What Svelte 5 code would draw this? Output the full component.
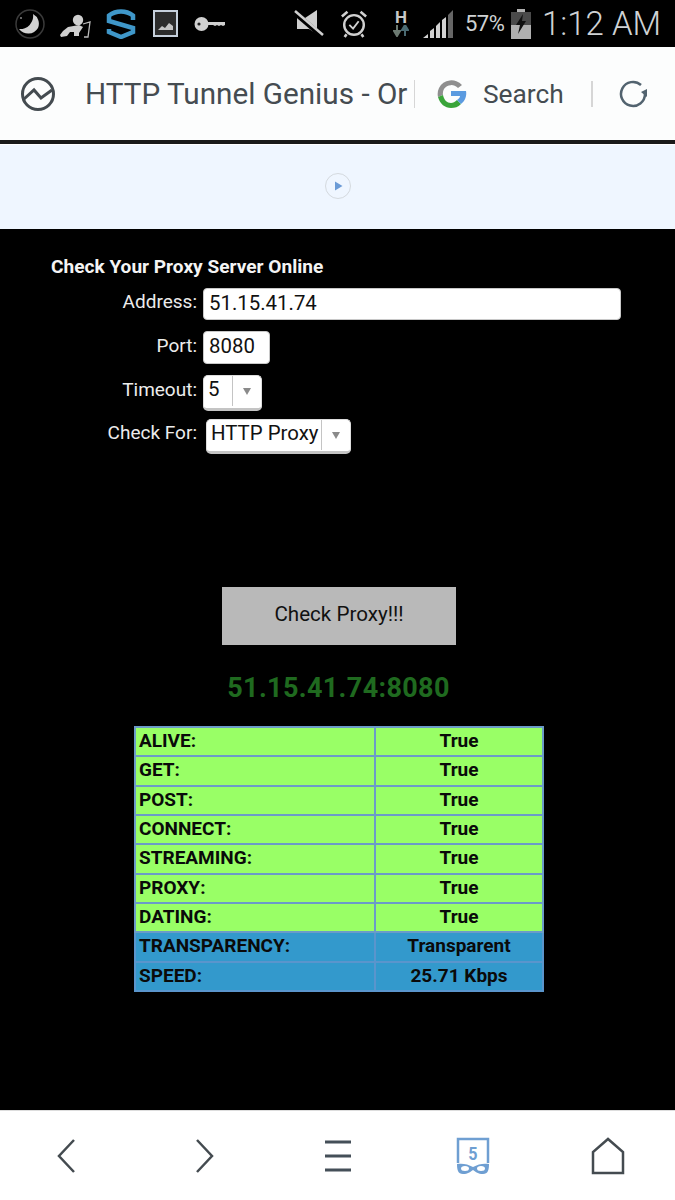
<script>
  const rows = [
    ['ALIVE:', 'True', 'g'], ['GET:', 'True', 'g'], ['POST:', 'True', 'g'], ['CONNECT:', 'True', 'g'],
    ['STREAMING:', 'True', 'g'], ['PROXY:', 'True', 'g'], ['DATING:', 'True', 'g'],
    ['TRANSPARENCY:', 'Transparent', 'b'], ['SPEED:', '25.71 Kbps', 'b']
  ];
</script>

<div class="page">
  <header class="status">
    <svg class="i-moon" width="30" height="30" viewBox="0 0 30 30"><circle cx="15" cy="15" r="14" fill="none" stroke="#3a3a3a" stroke-width="1.5"/><path d="M18 5a11 11 0 0 1 5 14a11.500 11.500 0 0 1-19 1a13 13 0 0 0 14-15z" fill="#d2d2d2"/><circle cx="6" cy="9" r="1" fill="#888"/></svg>
    <svg class="i-baby" width="32" height="24" viewBox="0 0 32 24"><circle cx="19" cy="6" r="5.200" fill="#cfcfcf"/><path d="M1 21l3-4 5-4 11-2 4 2-2 3-2 3v3h-5v-4h-4l-3 4-6 1z" fill="#cfcfcf"/><path d="M24 10l7-2-2 15h-4" fill="none" stroke="#bbb" stroke-width="1.300"/></svg>
    <svg class="i-s" width="30" height="30" viewBox="0 0 30 30"><path d="M27 11V6.500C23 3.500 19 2.500 15 2.500S7 3.500 3 6.500V12l24 7v4l-12 5-12-5v-3" fill="none" stroke="#3f97c9" stroke-width="4.500"/></svg>
    <svg class="i-pic" width="25" height="28" viewBox="0 0 25 28"><rect x="1" y="1" width="23" height="25" fill="#2c2c2c" stroke="#c6d0dc" stroke-width="2"/><path d="M5 20l4-4 3 2 4-5 4 3v4z" fill="#c4c4c4"/></svg>
    <svg class="i-key" width="32" height="16" viewBox="0 0 32 16"><circle cx="7.500" cy="8" r="7" fill="#d0d0d0"/><circle cx="5" cy="8" r="1.600" fill="#222"/><path d="M14 6h17v3l-2 1-2-1-2 1-2-1-2 1-2-1h-5z" fill="#d0d0d0"/></svg>
    <svg class="i-mute" width="30" height="30" viewBox="0 0 30 30"><path d="M3 9h8l12-8v24l-8-5H3z" fill="#cfcfcf"/><path d="M1 4l28 24" stroke="#000" stroke-width="5"/><path d="M1 2l28 24" stroke="#cfcfcf" stroke-width="2.500"/></svg>
    <svg class="i-alarm" width="28" height="30" viewBox="0 0 30 32"><circle cx="15" cy="17" r="10.500" fill="none" stroke="#d0d0d0" stroke-width="2.600"/><path d="M10 17l4 4 6-8" fill="none" stroke="#d0d0d0" stroke-width="2"/><path d="M2 8l6-5M28 8l-6-5M7 27l-2 3M23 27l2 3" stroke="#d0d0d0" stroke-width="2.800"/></svg>
    <div class="net"><span>H</span><svg width="16" height="12" viewBox="0 0 16 12"><path d="M4 0v7M1 6l3 5 3-5z" stroke="#6c7a72" stroke-width="2" fill="#6c7a72"/><path d="M12 11V4M9 5l3-5 3 5z" stroke="#4a6a72" stroke-width="2" fill="#4a6a72"/></svg></div>
    <svg class="i-sig" width="31" height="31" viewBox="0 0 31 31"><path d="M0 30l5-4v4zM7 30v-7l4-3v10zM13 30V18l4-4v16zM19 30V12l4-3v21z" fill="#d2d2d2"/><path d="M25 30V7l5-5v28z" fill="#666"/></svg>
    <span class="pct">57%</span>
    <svg class="i-bat" width="20" height="30" viewBox="0 0 20 30"><path d="M6 0h8v3h6v27H0V3h6z" fill="#b0b0b0"/><path d="M0 3h20v13H0z" fill="#4a4a4a"/><path d="M12 5l-7 11h4l-2 9 8-13h-4z" fill="#111"/></svg>
    <span class="time">1:12 AM</span>
  </header>

  <nav class="urlbar">
    <svg class="i-globe" width="36" height="36" viewBox="0 0 36 36"><circle cx="18" cy="18" r="15.500" fill="none" stroke="#444b50" stroke-width="3"/><path d="M4 23l10-9 7 8 11-8" fill="none" stroke="#444b50" stroke-width="3"/></svg>
    <span class="title">HTTP Tunnel Genius - Or</span>
    <i class="sep"></i>
    <svg class="i-g" width="32" height="32" viewBox="0 0 32 32"><path d="M27 7A14 14 0 0 0 4 10a14 14 0 0 0-1 9l5-2a9 9 0 0 1 1-6 9 9 0 0 1 14-1z" fill="#8f8f8f"/><path d="M3 19c2 7 7 11 13 11 4 0 7-1 10-4l-4-4c-2 2-4 3-6 3-4 0-7-3-8-8z" fill="#3aa53a"/><path d="M16 13h15c1 5-1 10-5 13l-4-4c2-1 3-3 3-4h-9z" fill="#5b9be0"/></svg>
    <span class="search">Search</span>
    <i class="sep sep2"></i>
    <svg class="i-reload" width="30" height="30" viewBox="0 0 30 30"><path d="M26 15a12 12 0 1 1-4-9" fill="none" stroke="#52636f" stroke-width="2.500"/><path d="M28 10v8l-6-5z" fill="#52636f"/></svg>
  </nav>

  <aside class="ad">
    <div class="play"><svg width="26" height="26" viewBox="0 0 26 26"><circle cx="13" cy="13" r="12.500" fill="none" stroke="#d4d9de"/><path d="M10 8.500l7.500 4.500-7.500 4.500z" fill="#6b9bd6"/></svg></div>
  </aside>

  <main class="content">
    <h1>Check Your Proxy Server Online</h1>
    <form class="form">
      <label for="a">Address:</label>
      <div class="field addr" id="a">51.15.41.74</div>
      <label class="lower" for="p">Port:</label>
      <div class="field port" id="p">8080</div>
      <label class="lower" for="t">Timeout:</label>
      <div class="select sel-t" id="t"><span class="val">5</span><span class="arrow"></span></div>
      <label for="c">Check For:</label>
      <div class="select sel-c" id="c"><span class="val">HTTP Proxy</span><span class="arrow"></span></div>
    </form>
    <div class="btn-wrap"><button type="button">Check Proxy!!!</button></div>
    <h2>51.15.41.74:8080</h2>
    <table>
      <tbody>
        {#each rows as r}
          <tr class={r[2]}><th>{r[0]}</th><td>{r[1]}</td></tr>
        {/each}
      </tbody>
    </table>
  </main>

  <footer class="bottom">
    <svg class="b-back" width="24" height="36" viewBox="0 0 24 36"><path d="M19 2L4 18l15 16" fill="none" stroke="#444b50" stroke-width="2.500"/></svg>
    <svg class="b-fwd" width="24" height="36" viewBox="0 0 24 36"><path d="M5 2l15 16L5 34" fill="none" stroke="#444b50" stroke-width="2.500"/></svg>
    <svg class="b-menu" width="28" height="36" viewBox="0 0 28 36"><path d="M1 4h26M1 18h26M1 32h26" stroke="#444f58" stroke-width="3"/></svg>
    <div class="tabs"><svg width="34" height="38" viewBox="0 0 34 38"><path d="M2 26V2h30v24" fill="none" stroke="#6f9fd2" stroke-width="2.500"/><path d="M1 27c5-1 11 0 16 3 5-3 11-4 16-3 0 6-1 10-6 10-5 0-7-2-10-4-3 2-5 4-10 4-5 0-6-4-6-10z" fill="#6f9fd2"/><ellipse cx="9" cy="31.500" rx="4" ry="2.500" fill="#fff"/><ellipse cx="25" cy="31.500" rx="4" ry="2.500" fill="#fff"/></svg><span>5</span></div>
    <svg class="b-home" width="34" height="38" viewBox="0 0 34 38"><path d="M2 36V15L17 2l15 13v21z" fill="none" stroke="#444b50" stroke-width="2.500"/></svg>
  </footer>
</div>

<style>
  :global(body) { margin: 0; background: #000; font-family: Roboto, "Liberation Sans", sans-serif; }
  .page { width: 675px; height: 1200px; display: flex; flex-direction: column; overflow: hidden; background: #000; }

  .status { height: 47px; flex: none; display: flex; align-items: center; color: #cfd2d4; box-sizing: border-box; padding-left: 15px; }
  .i-baby { margin-left: 14px; margin-top: 4px; }
  .i-s { margin-left: 15px; }
  .i-pic { margin-left: 17px; }
  .i-key { margin-left: 16px; }
  .i-mute { margin-left: 68px; }
  .i-alarm { margin-left: 16px; }
  .net { margin-left: 24px; width: 18px; display: flex; flex-direction: column; align-items: center; }
  .net span { font-size: 17px; font-weight: 700; line-height: 15px; color: #c8c8c8; }
  .i-sig { margin-left: 13px; }
  .pct { margin-left: 11px; font-size: 22px; letter-spacing: -0.5px; width: 46px; }
  .i-bat { margin-left: 0; }
  .time { margin-left: 11px; font-size: 33px; font-weight: 300; white-space: nowrap; }

  .urlbar { height: 93px; flex: none; box-sizing: border-box; background: #fcfdfd; display: flex; align-items: center; padding-left: 20px; color: #454c51; }
  .title { margin-left: 29px; font-size: 29.700px; width: 329px; overflow: hidden; white-space: nowrap; }
  .sep { width: 1px; height: 28px; background: #d6d6d6; }
  .i-g { margin-left: 20px; }
  .search { margin-left: 16px; font-size: 26.300px; width: 108px; }
  .sep2 { width: 2px; height: 26px; }
  .i-reload { margin-left: 26px; }

  .ad { height: 85px; flex: none; background: #eff6ff; border-top: 4px solid #1a1a1a; box-shadow: inset 0 1px 0 #fff; display: flex; align-items: center; justify-content: center; }
  .play { display: flex; margin-top: -1px; }

  .content { flex: 1; background: #000; color: #fff; display: flex; flex-direction: column; padding-top: 28px; min-height: 0; }
  h1 { margin: 0 0 0 51px; font-size: 19.100px; font-weight: 700; line-height: 20px; color: #f4f4f4; }
  .form { display: grid; grid-template-columns: 197px auto; column-gap: 6px; row-gap: 11px; margin-top: 11px; justify-items: start; align-items: start; }
  label { justify-self: end; font-size: 19px; line-height: 28px; color: #ececec; }
  .lower { padding-top: 1px; }
  .field { box-sizing: border-box; background: #fff; border-radius: 4px; border: 1px solid #c8c8c8; color: #111; font-size: 20.400px; line-height: 29px; padding-left: 5px; }
  .addr { width: 418px; height: 32px; }
  .port { width: 67px; height: 33px; }
  .select { box-sizing: border-box; display: flex; height: 36px; background: #fff; border-radius: 5px; border: 1px solid #ddd; border-bottom: 3px solid #c4c4c4; color: #111; font-size: 20.400px; line-height: 27px; }
  .sel-t { width: 59px; margin-bottom: -3px; }
  .sel-c { width: 145px; margin-left: 3px; height: 35px; }
  .val { padding-left: 4px; flex: 1; border-right: 1px solid #c4c4c4; height: 30px; white-space: nowrap; }
  .arrow { flex: none; width: 28px; position: relative; }
  .arrow::after { content: ""; position: absolute; left: 10px; top: 12px; border: 4px solid transparent; border-top: 7px solid #8a8a8a; border-bottom: 0; }

  .btn-wrap { display: flex; margin: 133px 0 0 222px; }
  button { width: 234px; height: 58px; background: #b9b9b9; border: 0; padding: 0 0 5px; font-family: inherit; font-size: 20.600px; color: #111; }
  h2 { margin: 25px 0 0; width: 677px; text-align: center; font-size: 27px; font-weight: 700; line-height: 36px; letter-spacing: 0.35px; color: #1f6a1f; }

  table { margin: 20px 0 0 134px; width: 410px; height: 266px; border-collapse: collapse; table-layout: fixed; font-size: 19px; color: #0a0a0a; border: 2px solid #6b9bc8; }
  th, td { border: 2px solid #6b9bc8; padding: 0 0 2px; font-weight: 700; height: 25px; }
  th { width: 235px; text-align: left; padding-left: 3px; }
  td { text-align: center; }
  tr.g { background: #99ff66; }
  tr.b { background: #3399cc; }
  tr.b th, tr.b td { border-color: #5a95cc; }

  .bottom { height: 90px; flex: none; box-sizing: border-box; background: #fff; border-top: 1px solid #ddd; display: flex; align-items: center; padding-left: 55px; }
  .b-fwd { margin-left: 113px; }
  .b-menu { margin-left: 108px; }
  .tabs { margin-left: 104px; position: relative; display: flex; width: 34px; height: 38px; }
  .b-home { margin-left: 101px; }
  .tabs span { position: absolute; left: 0; right: 0; top: 5px; text-align: center; font-size: 19px; font-weight: 700; color: #6f9fd2; transform: scaleX(0.85); }
</style>
